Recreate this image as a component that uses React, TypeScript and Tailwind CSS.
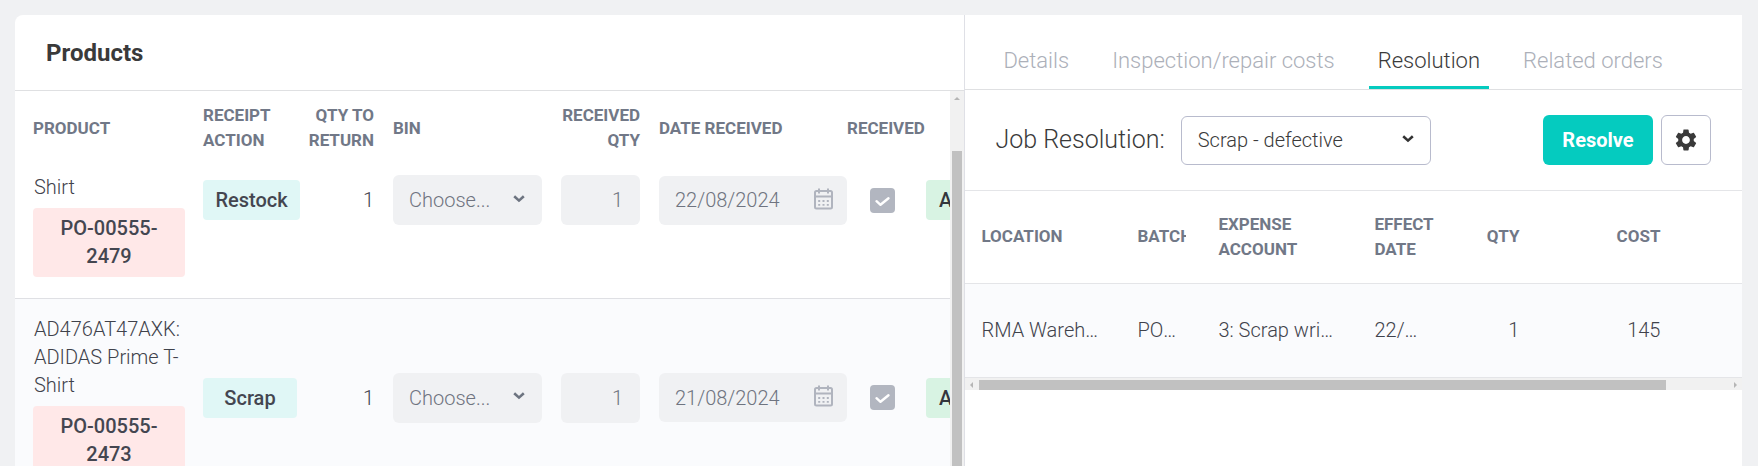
import React, { useState } from "react";
import { MdSettings } from "react-icons/md";

interface Product {
  id:       string;
  name:     string;
  order:    string;
  action:   string;
  qty:      number;
  date:     string;
  status:   string;
}

const PRODUCTS: Product[] = [
  { id: "p1", name: "Shirt", order: "PO-00555-2479", action: "Restock", qty: 1, date: "22/08/2024", status: "Approved" },
  { id: "p2", name: "AD476AT47AXK: ADIDAS Prime T-Shirt", order: "PO-00555-2473", action: "Scrap", qty: 1, date: "21/08/2024", status: "Approved" },
];

const TABS = ["Details", "Inspection/repair costs", "Resolution", "Related orders"];

function Chevron({ className }: { className: string }) {
  return (
    <svg viewBox="0 0 12 8" className={`pointer-events-none h-2 w-3 ${className}`} fill="none" stroke="currentColor" strokeWidth="2.6" aria-hidden="true">
      <path d="M1.2 1.2 6 5.6l4.8-4.4" />
    </svg>
  );
}

function CalendarIcon() {
  return (
    <svg viewBox="0 0 19 22" className="pointer-events-none h-[22px] w-[19px] text-[#b0b4be]" fill="none" stroke="currentColor" aria-hidden="true">
      <rect x="1" y="3" width="17" height="17.5" rx="1.5" strokeWidth="2" />
      <path d="M1 8.5h17M5 0.5v5M14 0.5v5" strokeWidth="2" />
      <path d="M4.2 13h2M8.5 13h2M12.8 13h2M4.2 16.8h2M8.5 16.8h2M12.8 16.8h2" strokeWidth="1.8" />
    </svg>
  );
}

function ProductRow({ product, first }: { product: Product; first: boolean }) {
  const cell = first ? "align-top pt-[18px]" : "align-middle";

  return (
    <tr className={first ? "border-b border-[#dfe0e4]" : "bg-[#fafbfd]"}>
      <td className="pt-4 pr-[9px] pb-[21px] pl-[18px] align-top">
        <div className="pl-px text-[#3f424b]">{product.name}</div>
        <div className="mt-[7px] rounded bg-[#ffe8e8] px-5 pt-[6px] pb-[7px] text-center font-medium text-[#444650]">{product.order}</div>
      </td>
      <td className={`pl-[9px] ${cell}`}>
        <div className="flex h-[50px] items-center">
          <span className="flex h-10 min-w-[94px] items-center justify-center rounded bg-[#e0f7f6] px-[13px] font-medium text-[#444650]">{product.action}</span>
        </div>
      </td>
      <td className={`pr-[9px] ${cell}`}>
        <div className="flex h-[50px] items-center justify-end text-[#3f424b]">{product.qty}</div>
      </td>
      <td className={`px-[10px] ${cell}`}>
        <div className="grid items-center">
          <select disabled aria-label={`Bin for ${product.order}`} className="col-start-1 row-start-1 h-[50px] w-full appearance-none rounded-md bg-[#f0f1f3] pl-4 text-[#6f7480] opacity-100">
            <option>Choose...</option>
          </select>
          <Chevron className="col-start-1 row-start-1 mr-[17px] mb-[3px] justify-self-end text-[#6d7480]" />
        </div>
      </td>
      <td className={`pr-[10px] pl-[9px] ${cell}`}>
        <input disabled aria-label={`Received quantity for ${product.order}`} defaultValue={product.qty} className="block h-[50px] w-full rounded-md bg-[#f0f1f3] pr-[17px] text-right text-[#6f7480]" />
      </td>
      <td className={`pl-[9px] ${cell}`}>
        <div className="grid h-[50px] items-center">
          <input disabled aria-label={`Date received for ${product.order}`} defaultValue={product.date} className="col-start-1 row-start-1 h-[49px] w-full rounded-md bg-[#f0f1f3] pl-4 text-[#6f7480]" />
          <span className="col-start-1 row-start-1 mr-[14px] mb-[3px] justify-self-end"><CalendarIcon /></span>
        </div>
      </td>
      <td className={`pl-[23px] ${cell}`}>
        <div className="grid h-[50px] items-center">
          <input type="checkbox" disabled defaultChecked aria-label={`${product.order} received`} className="col-start-1 row-start-1 size-[25px] appearance-none rounded bg-[#b2b6c0]" />
          <svg viewBox="0 0 25 25" className="pointer-events-none col-start-1 row-start-1 size-[25px]" fill="none" stroke="#fff" strokeWidth="2.4" strokeLinecap="round" strokeLinejoin="round" aria-hidden="true">
            <path d="M6.5 13.2l4 3.6 8-6.6" />
          </svg>
        </div>
      </td>
      <td className={cell}>
        <div className="flex h-[50px] items-center">
          <span className="flex h-10 items-center rounded bg-[#d8f3e3] px-[13px] font-medium text-[#33363d]">{product.status}</span>
        </div>
      </td>
    </tr>
  );
}

function ProductsPanel() {
  return (
    <section className="flex min-w-0 flex-[950] flex-col overflow-hidden rounded-tl-lg border-r border-[#dfe0e6] bg-white">
      <h2 className="border-b border-[#dfe0e2] px-[31px] pt-[22px] pb-[21px] text-[24px] leading-8 font-bold text-[#3a3a3a]">Products</h2>
      <div className="flex min-h-0 flex-1">
        <div className="min-w-0 flex-1 overflow-hidden">
          <table className="w-[1030px] table-fixed border-collapse text-[20px] leading-7 font-light">
            <colgroup>
              <col className="w-[179px]" />
              <col className="w-[106px]" />
              <col className="w-[83px]" />
              <col className="w-[169px]" />
              <col className="w-[98px]" />
              <col className="w-[197px]" />
              <col className="w-[79px]" />
              <col />
            </colgroup>
            <thead>
              <tr className="h-[66px] text-left text-[17px] leading-[25px] text-[#717887] uppercase [&>th]:pt-3 [&>th]:pb-1 [&>th]:font-bold">
                <th className="pl-[18px]">Product</th>
                <th className="pl-[9px]">Receipt action</th>
                <th className="pr-[9px] text-right">Qty to return</th>
                <th className="pl-[10px]">Bin</th>
                <th className="pr-[10px] text-right">Received qty</th>
                <th className="pl-[9px]">Date received</th>
                <th>Received</th>
                <td />
              </tr>
            </thead>
            <tbody>
              {PRODUCTS.map((p, i) => <ProductRow key={p.id} product={p} first={i === 0} />)}
            </tbody>
          </table>
        </div>
        {/* Scrollbar */}
        <div className="flex w-[14px] shrink-0 flex-col items-center bg-[#f1f1f1] pt-[6px]">
          <svg viewBox="0 0 6 3" className="h-[3px] w-[6px] shrink-0" fill="#b5b5b5" aria-hidden="true"><path d="M0 3 3 0l3 3z" /></svg>
          <div className="mt-[51px] w-[10px] flex-1 bg-[#c1c1c1]" />
        </div>
      </div>
    </section>
  );
}

function ResolutionPanel() {
  const [tab, setTab] = useState("Resolution");

  return (
    <section className="min-w-0 flex-[777] bg-white">
      <div role="tablist" className="flex gap-[25px] border-b border-[#dfe0e2] pt-[26px] pl-[29px]">
        {TABS.map((t) => (
          <button
            key={t}
            role="tab"
            aria-selected={t === tab}
            onClick={() => setTab(t)}
            className={`border-b-[3px] px-[9px] pt-1 pb-[9px] text-[22px] leading-8 font-light whitespace-nowrap ${t === tab ? "border-[#05cbbf] text-[#3a3a3a]" : "border-transparent text-[#acb0b9]"}`}
          >
            {t}
          </button>
        ))}
      </div>

      <div className="flex h-[101px] items-center border-b border-[#e4e5e8] pr-[31px] pl-[30px]">
        <label htmlFor="job-resolution" className="text-[25px] font-light whitespace-nowrap text-[#3a3a3a]">Job Resolution:</label>
        <div className="ml-4 grid w-[250px] items-center">
          <select id="job-resolution" className="col-start-1 row-start-1 h-[49px] w-full appearance-none rounded-md border border-[#b8bbcd] bg-white pl-4 text-[20px] font-light text-[#3a3a3a]">
            <option>Scrap - defective</option>
            <option>Restock</option>
          </select>
          <Chevron className="col-start-1 row-start-1 mr-[17px] mb-[3px] justify-self-end text-[#333]" />
        </div>
        <button className="ml-auto h-[50px] w-[110px] rounded-md bg-[#05cbbf] text-[20px] font-bold text-white">Resolve</button>
        <button aria-label="Settings" className="ml-2 flex size-[50px] items-center justify-center rounded-md border border-[#b8bbcd] bg-white">
          <MdSettings size={26} color="#3a3a3a" />
        </button>
      </div>

      <div className="overflow-hidden">
        <table className="w-full table-fixed border-collapse">
          <colgroup>
            <col className="w-[156px]" />
            <col className="w-[81px]" />
            <col className="w-[156px]" />
            <col className="w-[81px]" />
            <col className="w-[96px]" />
            <col className="w-[141px]" />
            <col />
          </colgroup>
          <thead>
            <tr className="h-[92px] border-b border-[#e4e5e8] text-left text-[17px] leading-[25px] text-[#717887] uppercase [&>th]:px-4 [&>th]:font-bold">
              <th>Location</th>
              <th><div className="overflow-hidden">Batch</div></th>
              <th>Expense account</th>
              <th>Effect date</th>
              <th className="text-right">Qty</th>
              <th className="text-right">Cost</th>
              <td />
            </tr>
          </thead>
          <tbody>
            <tr className="h-[94px] border-b border-[#e4e5e8] bg-[#fafbfd] text-[20px] leading-7 font-light text-[#3f424b] [&>td]:px-4">
              <td><div className="truncate">RMA Warehouse</div></td>
              <td><div className="truncate">PO00555</div></td>
              <td><div className="truncate pr-1">3: Scrap write-off</div></td>
              <td><div className="truncate">22/08/2024</div></td>
              <td className="text-right">1</td>
              <td className="text-right">145</td>
              <td />
            </tr>
          </tbody>
        </table>
        {/* Scrollbar */}
        <div className="flex h-3 items-end bg-[#f1f1f1] px-[5px]">
          <svg viewBox="0 0 3 6" className="mb-[2px] h-[6px] w-[3px]" fill="#b5b5b5" aria-hidden="true"><path d="M3 0 0 3l3 3z" /></svg>
          <div className="ml-[6px] flex flex-1">
            <div className="h-[10px] w-[91%] bg-[#c1c1c1]" />
          </div>
          <svg viewBox="0 0 3 6" className="mb-[2px] h-[6px] w-[3px]" fill="#b5b5b5" aria-hidden="true"><path d="M0 0l3 3-3 3z" /></svg>
        </div>
      </div>
    </section>
  );
}

export default function App() {
  return (
    <main className="flex h-screen overflow-hidden bg-[#f0f1f3] pt-[15px] pr-4 pl-[15px] font-[Roboto,'Open_Sans',sans-serif]">
      <ProductsPanel />
      <ResolutionPanel />
    </main>
  );
}
